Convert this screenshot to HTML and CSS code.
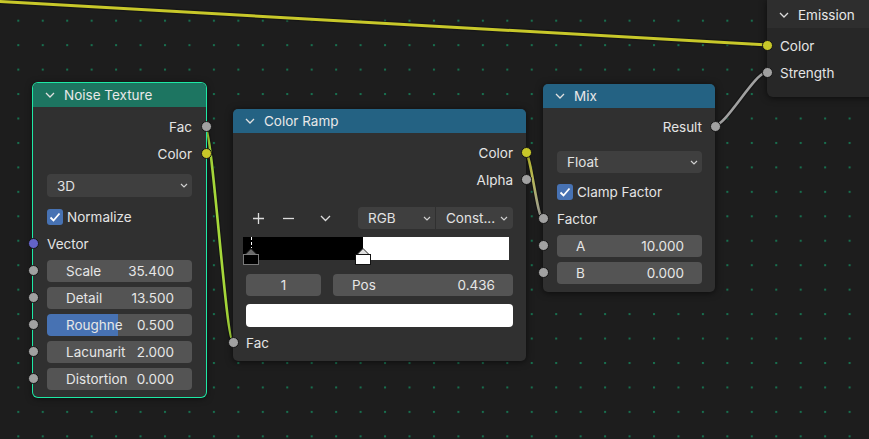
FILE: index.html
```html
<!DOCTYPE html>
<html>
<head>
<meta charset="utf-8">
<link rel="stylesheet" href="styles.css">
</head>
<body>
<div class="canvas">
  <svg class="links" width="869" height="439" viewBox="0 0 869 439">
    <defs>
      <pattern id="grid" x="17.3" y="19.7" width="24.45" height="24.45" patternUnits="userSpaceOnUse">
        <rect x="0" y="0" width="2" height="2" fill="#17704f"/>
      </pattern>
      <linearGradient id="g1" gradientUnits="userSpaceOnUse" x1="0" y1="152" x2="0" y2="219">
        <stop offset="0" stop-color="#c8c82a"/>
        <stop offset="1" stop-color="#a0a0a0"/>
      </linearGradient>
    </defs>
    <rect x="0" y="0" width="869" height="439" fill="url(#grid)"/>
    <g fill="none" stroke-linecap="round">
      <path d="M -5 1.2 L 767 45" stroke="#141414" stroke-opacity="0.7" stroke-width="5.5"/>
      <path d="M -5 1.2 L 767 45" stroke="#c8c82a" stroke-width="3"/>
      <path d="M 205 126 C 212 126, 226 342, 233 342" stroke="#141414" stroke-opacity="0.7" stroke-width="5"/>
      <path d="M 205 126 C 212 126, 226 342, 233 342" stroke="#a6d83a" stroke-width="2.6"/>
      <path d="M 525 152 C 531 152, 537 219, 543 219" stroke="#141414" stroke-opacity="0.7" stroke-width="5"/>
      <path d="M 525 152 C 531 152, 537 219, 543 219" stroke="url(#g1)" stroke-width="2.6"/>
      <path d="M 714 126 C 726 126, 755 72, 767 72" stroke="#141414" stroke-opacity="0.7" stroke-width="5"/>
      <path d="M 714 126 C 726 126, 755 72, 767 72" stroke="#a0a0a0" stroke-width="2.6"/>
    </g>
  </svg>

  <!-- Emission -->
  <div class="node emission">
    <div class="header dark">
      <span class="chev"><svg width="10" height="6" viewBox="0 0 10 6"><polyline points="1,1 5,5 9,1" fill="none" stroke="#dcdcdc" stroke-width="1.3"/></svg></span>
      <span>Emission</span>
    </div>
    <div class="body em-body">
      <div class="row in"><span class="sock yellow"></span>Color</div>
      <div class="row in"><span class="sock gray"></span>Strength</div>
    </div>
  </div>

  <!-- Noise Texture -->
  <div class="node noise">
    <div class="header green">
      <span class="chev"><svg width="10" height="6" viewBox="0 0 10 6"><polyline points="1,1 5,5 9,1" fill="none" stroke="#e0e0e0" stroke-width="1.3"/></svg></span>
      <span>Noise Texture</span>
    </div>
    <div class="body">
      <div class="row out">Fac<span class="sock gray"></span></div>
      <div class="row out">Color<span class="sock yellow"></span></div>
      <div class="dd mt7"><span>3D</span><span class="ddchev"><svg width="8" height="5" viewBox="0 0 8 5"><polyline points="1,1 4,4 7,1" fill="none" stroke="#d0d0d0" stroke-width="1.2"/></svg></span></div>
      <div class="row check mt6"><span class="box"><svg width="16" height="16" viewBox="0 0 16 16"><polyline points="3.5,8.5 6.5,11.5 12.5,4.5" fill="none" stroke="#fff" stroke-width="1.8"/></svg></span>Normalize</div>
      <div class="row in"><span class="sock purple"></span>Vector</div>
      <div class="row in"><span class="sock gray"></span><div class="field"><span>Scale</span><span>35.400</span></div></div>
      <div class="row in"><span class="sock gray"></span><div class="field"><span>Detail</span><span>13.500</span></div></div>
      <div class="row in"><span class="sock gray"></span><div class="field rough"><span>Roughne</span><span>0.500</span></div></div>
      <div class="row in"><span class="sock gray"></span><div class="field"><span>Lacunarit</span><span>2.000</span></div></div>
      <div class="row in"><span class="sock gray"></span><div class="field"><span>Distortion</span><span>0.000</span></div></div>
    </div>
  </div>

  <!-- Color Ramp -->
  <div class="node ramp">
    <div class="header blue">
      <span class="chev"><svg width="10" height="6" viewBox="0 0 10 6"><polyline points="1,1 5,5 9,1" fill="none" stroke="#e0e0e0" stroke-width="1.3"/></svg></span>
      <span>Color Ramp</span>
    </div>
    <div class="body">
      <div class="row out">Color<span class="sock yellow"></span></div>
      <div class="row out">Alpha<span class="sock gray"></span></div>
      <div class="tools">
        <span class="tbtn"><svg width="13" height="13" viewBox="0 0 13 13"><path d="M6.5 1 V12 M1 6.5 H12" stroke="#dcdcdc" stroke-width="1.3"/></svg></span>
        <span class="tbtn b2"><svg width="13" height="13" viewBox="0 0 13 13"><path d="M1 6.5 H12" stroke="#dcdcdc" stroke-width="1.3"/></svg></span>
        <span class="tbtn b3"><svg width="11" height="7" viewBox="0 0 11 7"><polyline points="1,1 5.5,5.5 10,1" fill="none" stroke="#dcdcdc" stroke-width="1.3"/></svg></span>
        <div class="ddgroup">
          <div class="dd seg left"><span>RGB</span><span class="ddchev"><svg width="8" height="5" viewBox="0 0 8 5"><polyline points="1,1 4,4 7,1" fill="none" stroke="#d0d0d0" stroke-width="1.2"/></svg></span></div>
          <div class="dd seg right"><span>Const...</span><span class="ddchev"><svg width="8" height="5" viewBox="0 0 8 5"><polyline points="1,1 4,4 7,1" fill="none" stroke="#d0d0d0" stroke-width="1.2"/></svg></span></div>
        </div>
      </div>
      <div class="rampwrap">
        <div class="rampbar"></div>
        <span class="stopline l"></span>
        <svg class="stop s1" width="16" height="17" viewBox="0 0 16 17">
          <polygon points="8,0.5 14.5,7 1.5,7" fill="#6a6a6a" stroke="#111" stroke-width="1"/>
          <rect x="0.5" y="6.5" width="15" height="10" fill="#000" stroke="#7a7a7a" stroke-width="1"/>
        </svg>
        <svg class="stop s2" width="16" height="17" viewBox="0 0 16 17">
          <polygon points="8,0.5 14.5,7 1.5,7" fill="#e0e0e0" stroke="#222" stroke-width="1"/>
          <rect x="0.5" y="6.5" width="15" height="10" fill="#fff" stroke="#111" stroke-width="1"/>
        </svg>
      </div>
      <div class="stoprow">
        <div class="field idx"><span>1</span></div>
        <div class="field pos"><span>Pos</span><span>0.436</span></div>
      </div>
      <div class="swatch"></div>
      <div class="row in mt2"><span class="sock gray"></span>Fac</div>
    </div>
  </div>

  <!-- Mix -->
  <div class="node mix">
    <div class="header blue">
      <span class="chev"><svg width="10" height="6" viewBox="0 0 10 6"><polyline points="1,1 5,5 9,1" fill="none" stroke="#e0e0e0" stroke-width="1.3"/></svg></span>
      <span>Mix</span>
    </div>
    <div class="body">
      <div class="row out">Result<span class="sock gray"></span></div>
      <div class="dd mt11 h22"><span>Float</span><span class="ddchev"><svg width="8" height="5" viewBox="0 0 8 5"><polyline points="1,1 4,4 7,1" fill="none" stroke="#d0d0d0" stroke-width="1.2"/></svg></span></div>
      <div class="row check mt5"><span class="box"><svg width="16" height="16" viewBox="0 0 16 16"><polyline points="3.5,8.5 6.5,11.5 12.5,4.5" fill="none" stroke="#fff" stroke-width="1.8"/></svg></span>Clamp Factor</div>
      <div class="row in"><span class="sock gray"></span>Factor</div>
      <div class="row in"><span class="sock gray"></span><div class="field"><span>A</span><span>10.000</span></div></div>
      <div class="row in"><span class="sock gray"></span><div class="field"><span>B</span><span>0.000</span></div></div>
    </div>
  </div>
</div>
</body>
</html>
```

FILE: styles.css
```css
* { box-sizing: border-box; margin: 0; padding: 0; }

body {
  margin: 0;
  background: #1d1d1d;
  font-family: Inter, "DejaVu Sans", sans-serif;
  font-size: 13.5px;
  color: #e4e4e4;
}

.canvas {
  position: relative;
  width: 869px;
  height: 439px;
  overflow: hidden;
  background: #1d1d1d;
}

.links { position: absolute; left: 0; top: 0; }

/* nodes placed on the free canvas */
.node {
  position: absolute;
  background: #303030;
  border-radius: 5px;
  box-shadow: 0 1px 7px rgba(0, 0, 0, 0.6);
  --pad: 14px;
}
.noise { left: 33px; top: 83px; width: 173px; height: 314px; box-shadow: 0 0 0 1px #1de9a5, 0 1px 7px rgba(0,0,0,0.6); }
.ramp  { left: 233px; top: 109px; width: 293px; height: 252px; --pad: 13px; }
.mix   { left: 543px; top: 84px; width: 172px; height: 208px; }
.emission { left: 767px; top: 0; width: 140px; height: 97px; background: #272727; border-radius: 0 0 0 6px; --pad: 13px; }

.header {
  height: 24px;
  display: flex;
  align-items: center;
  padding-left: 12px;
  border-radius: 5px 5px 0 0;
  color: #e8e8e8;
}
.header.green { background: #1d7561; }
.header.blue { background: #246283; }
.header.dark { background: #2e2e2e; height: 28px; padding-top: 2px; border-radius: 0; }

.chev { width: 10px; height: 6px; margin-right: 9px; display: flex; }
.chev svg { display: block; }

.body {
  display: flex;
  flex-direction: column;
  padding: 6px var(--pad) 5px;
}
.mix .body { padding: 5px 13px 6px 14px; }
.em-body { padding-top: 4px; }

.row {
  height: 27px;
  display: flex;
  align-items: center;
  position: relative;
  flex-shrink: 0;
  white-space: nowrap;
}
.row.out { justify-content: flex-end; }

.sock {
  position: absolute;
  width: 11px;
  height: 11px;
  border-radius: 50%;
  border: 1px solid #161616;
  top: 8px;
}
.out .sock { right: calc(-1 * var(--pad) - 5.5px); }
.in .sock { left: calc(-1 * var(--pad) - 5.5px); }
.mix .out .sock { right: -18.5px; }
.sock.gray { background: #a1a1a1; }
.sock.yellow { background: #c7c729; }
.sock.purple { background: #6363c7; }

.mt2 { margin-top: 2px; }
.mt5 { margin-top: 5px; }
.mt6 { margin-top: 6px; }
.mt7 { margin-top: 7px; }
.mt11 { margin-top: 11px; }

.dd {
  height: 23px;
  background: #3f3f3f;
  border-radius: 4px;
  display: flex;
  align-items: center;
  justify-content: space-between;
  padding: 0 4px 0 10px;
  flex-shrink: 0;
  color: #e2e2e2;
  white-space: nowrap;
}
.dd.h22 { height: 22px; }
.ddchev { display: flex; width: 8px; height: 5px; }
.ddchev svg { display: block; }

.check .box {
  width: 16px;
  height: 16px;
  background: #4772b3;
  border-radius: 3px;
  margin-right: 4px;
  display: flex;
}

.field {
  height: 22px;
  width: 100%;
  background: #545454;
  border-radius: 4px;
  display: flex;
  align-items: center;
  justify-content: space-between;
  padding: 0 18px 0 19px;
  color: #e6e6e6;
  white-space: nowrap;
}
.field.rough {
  background: linear-gradient(to right, #4772b3 0, #4772b3 71px, #545454 71px);
}

/* color ramp */
.tools {
  margin-top: 14px;
  height: 22px;
  display: flex;
  align-items: center;
}
.tbtn { width: 25px; height: 22px; display: flex; align-items: center; justify-content: center; }
.tbtn svg { display: block; }
.tbtn.b2 { margin-left: 5px; }
.tbtn.b3 { margin-left: 12px; }
.ddgroup { margin-left: auto; display: flex; width: 155px; height: 22px; }
.dd.seg { height: 22px; width: 77px; }
.dd.seg.left { border-radius: 4px 0 0 4px; }
.dd.seg.right { border-radius: 0 4px 4px 0; margin-left: 1px; padding-right: 5px; }

.rampwrap {
  position: relative;
  margin-top: 8px;
  height: 27px;
}
.rampbar {
  margin-left: -3px;
  width: 266px;
  height: 23px;
  background: linear-gradient(to right, #000 0, #000 120px, #fff 120px);
}
.stopline {
  position: absolute;
  top: 0;
  width: 1px;
  height: 11px;
  background: repeating-linear-gradient(#fff 0 3px, #000 3px 5px);
}
.stopline.l { left: 5px; }
.stop { position: absolute; top: 11px; display: block; }
.stop.s1 { left: -3px; }
.stop.s2 { left: 109px; }

.stoprow {
  margin-top: 10px;
  display: flex;
  justify-content: space-between;
}
.field.idx { width: 75px; justify-content: center; padding: 0; }
.field.pos { width: 180px; }

.swatch {
  margin-top: 8px;
  height: 23px;
  background: #fff;
  border-radius: 4px;
  flex-shrink: 0;
}
```
